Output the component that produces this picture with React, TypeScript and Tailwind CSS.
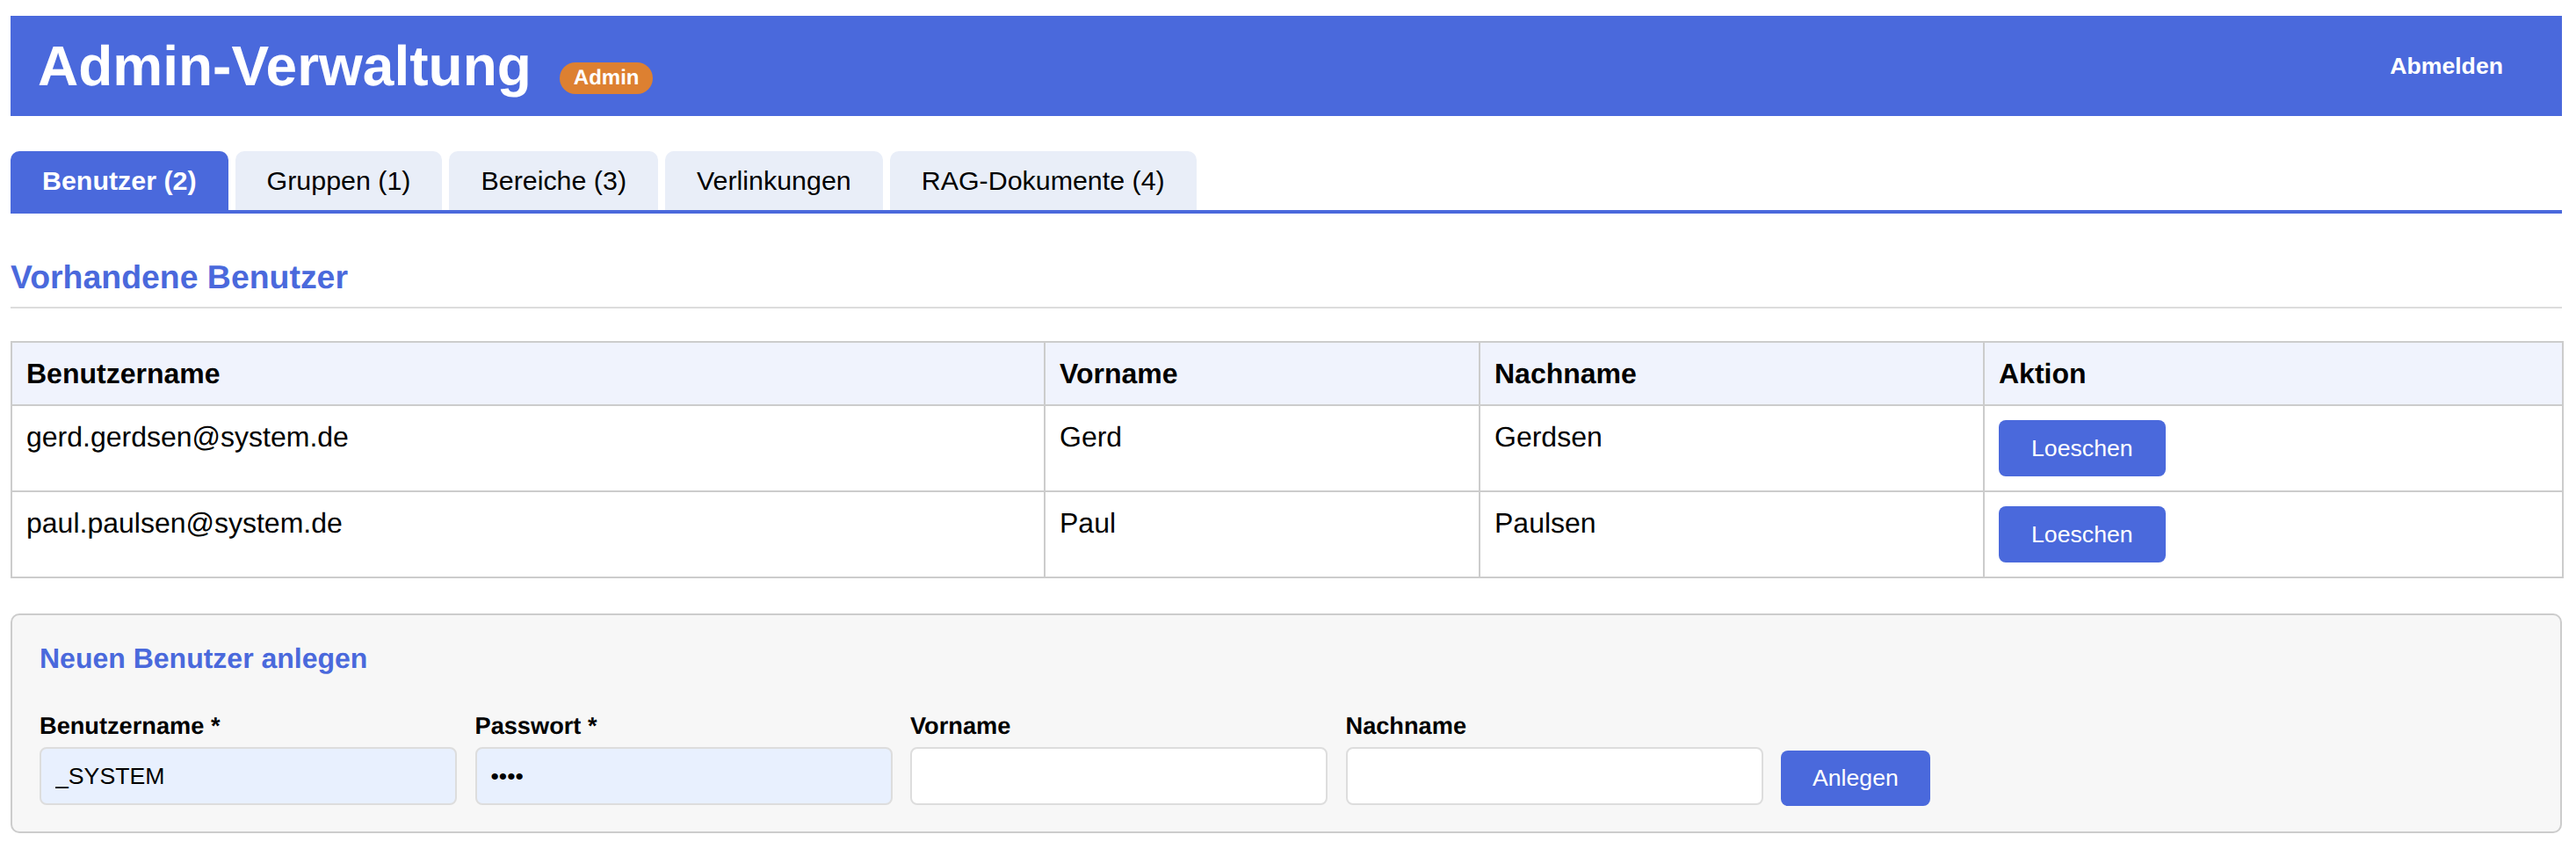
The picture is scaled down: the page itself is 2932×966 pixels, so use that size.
const tabs = ["Benutzer (2)", "Gruppen (1)", "Bereiche (3)", "Verlinkungen", "RAG-Dokumente (4)"]

const users = [
  { username: "gerd.gerdsen@system.de", firstName: "Gerd", lastName: "Gerdsen" },
  { username: "paul.paulsen@system.de", firstName: "Paul", lastName: "Paulsen" },
]

const fields = [
  { label: "Benutzername *", type: "text", value: "_SYSTEM", filled: true },
  { label: "Passwort *", type: "password", value: "abcd", filled: true },
  { label: "Vorname", type: "text", value: "", filled: false },
  { label: "Nachname", type: "text", value: "", filled: false },
]

const thClass = "border-2 border-[#ccc] px-[16px] pb-[16px] pt-[17px] text-left align-top text-[32px] font-bold leading-[37px]"
const tdClass = "border-2 border-[#ccc] p-[16px] text-left align-top text-[32px] leading-[38px]"

export default function App() {
  return (
    <div className="min-h-[966px] bg-white pl-[12px] pt-[18px] font-['Liberation_Sans',Arial,sans-serif] text-black [text-rendering:geometricPrecision]">
      <div className="w-[2904px]">
        {/* Header */}
        <div className="flex h-[114px] items-center justify-between bg-[#4a69dc] pl-[31px] pr-[67px] text-white">
          <div className="flex items-center">
            <h1 className="text-[64px] font-bold leading-[74px]">Admin-Verwaltung</h1>
            <span className="ml-[32px] mt-[28px] flex h-[36px] items-center rounded-[18px] bg-[#dd8031] px-[16px] text-[24px] font-bold">
              Admin
            </span>
          </div>
          <button className="text-[26.67px] font-bold leading-[30px]">Abmelden</button>
        </div>

        {/* Tabs */}
        <div className="mt-[40px] flex gap-[8px] border-b-4 border-[#4a69dc]">
          {tabs.map((tab, i) => (
            <button
              key={tab}
              className={
                i === 0
                  ? "h-[67px] rounded-t-[10px] bg-[#4a69dc] px-[36px] text-[30.4px] font-bold text-white"
                  : "h-[67px] rounded-t-[10px] bg-[#e9eef8] px-[36px] text-[30.4px] text-black"
              }
            >
              {tab}
            </button>
          ))}
        </div>

        {/* Benutzerliste */}
        <h2 className="mt-[51px] border-b-2 border-[#ddd] pb-[12px] text-[37.44px] font-bold leading-[43px] text-[#4a69dc]">
          Vorhandene Benutzer
        </h2>

        <table className="mt-[37px] w-full table-fixed border-collapse">
          <colgroup>
            <col className="w-[1176px]" />
            <col className="w-[495px]" />
            <col className="w-[574px]" />
            <col className="w-[659px]" />
          </colgroup>
          <thead>
            <tr className="bg-[#f0f3fd]">
              <th className={thClass}>Benutzername</th>
              <th className={thClass}>Vorname</th>
              <th className={thClass}>Nachname</th>
              <th className={thClass}>Aktion</th>
            </tr>
          </thead>
          <tbody>
            {users.map((user) => (
              <tr key={user.username}>
                <td className={tdClass}>{user.username}</td>
                <td className={tdClass}>{user.firstName}</td>
                <td className={tdClass}>{user.lastName}</td>
                <td className={tdClass}>
                  <button className="block h-[64px] rounded-[8px] bg-[#4a69dc] px-[37px] text-[26.67px] leading-[30px] text-white">
                    Loeschen
                  </button>
                </td>
              </tr>
            ))}
          </tbody>
        </table>

        {/* Neuer Benutzer */}
        <div className="mt-[40px] h-[250px] rounded-[10px] border-2 border-[#ccc] bg-[#f7f7f7] px-[31px] pt-[30px]">
          <h3 className="text-[32px] font-bold leading-[38px] text-[#4a69dc]">Neuen Benutzer anlegen</h3>
          <div className="mt-[42px] flex items-end gap-[20.5px]">
            {fields.map((field) => (
              <div key={field.label} className="w-[475px]">
                <label className="mb-[9px] block text-[27.2px] font-bold leading-[31px]">{field.label}</label>
                <input
                  type={field.type}
                  defaultValue={field.value}
                  readOnly
                  className={
                    field.filled
                      ? "block h-[66px] w-full rounded-[8px] border-2 border-[#ddd] bg-[#e8f0fe] px-[16px] text-[26.67px] text-black"
                      : "block h-[66px] w-full rounded-[8px] border-2 border-[#ddd] bg-white px-[16px] text-[26.67px] text-black"
                  }
                />
              </div>
            ))}
            <button className="-mb-[1px] h-[63px] rounded-[8px] bg-[#4a69dc] px-[36px] pb-[2px] text-[26.67px] leading-[30px] text-white">
              Anlegen
            </button>
          </div>
        </div>
      </div>
    </div>
  )
}
